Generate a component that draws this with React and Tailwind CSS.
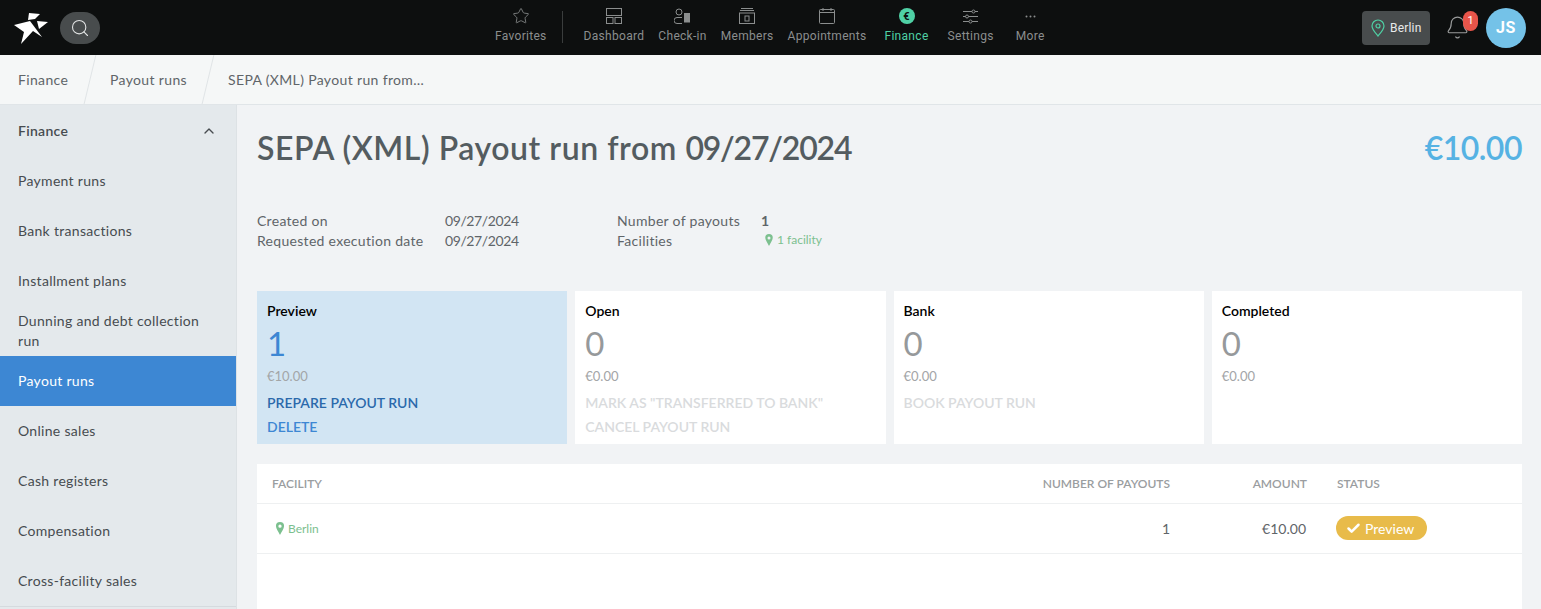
import { ChevronUp, Search, Star, Check, Bell } from "lucide-react";

const Pin = ({ className }) => (
	<svg viewBox="0 0 12 16" className={className} fill="currentColor">
		<path fillRule="evenodd" d="M6 0a5 5 0 0 1 5 5c0 3-3 7-5 11C4 12 1 8 1 5a5 5 0 0 1 5-5Zm0 3.2a2 2 0 1 0 0 4 2 2 0 0 0 0-4Z" />
	</svg>
);

const OutlinePin = () => (
	<svg viewBox="0 0 14 18" className="w-[14px] h-[18px] text-[#4fd1a5]" fill="none" stroke="currentColor" strokeWidth="1.2">
		<path d="M7 1a6 6 0 0 1 6 6c0 3.5-3.5 7-6 10C4.500 14 1 10.500 1 7a6 6 0 0 1 6-6Z" />
		<circle cx="7" cy="7" r="2" />
	</svg>
);

const Logo = () => (
	<svg viewBox="0 0 35 32" className="w-[35px] h-[32px]" fill="#fff">
		<path d="M15 1 L26 2 L21 7 L14 8 Z" />
		<path d="M0 13 L16 9 L28 25 L19 19 L7 32 L10 20 Z" />
		<path d="M23 9 L34 10 L25 17 Z" />
	</svg>
);

const DashboardIcon = () => (
	<svg viewBox="0 0 16 16" className="w-[16px] h-[16px]" fill="none" stroke="currentColor">
		<rect x="0.5" y="0.5" width="15" height="7" />
		<rect x="0.5" y="9.500" width="6.500" height="6" />
		<rect x="9" y="9.500" width="6.500" height="6" />
	</svg>
);

const CheckInIcon = () => (
	<svg viewBox="0 0 17 16" className="w-[17px] h-[16px]" fill="none" stroke="currentColor">
		<circle cx="5" cy="4" r="3" />
		<path d="M8 15.500H3a2.500 2.500 0 0 1 0-6h5" />
		<rect x="10" y="5" width="6" height="9.500" fill="currentColor" stroke="none" />
	</svg>
);

const MembersIcon = () => (
	<svg viewBox="0 0 16 16" className="w-[16px] h-[16px]" fill="none" stroke="currentColor">
		<path d="M2 .5h12M1 2.500h14" />
		<rect x="0.5" y="5" width="15" height="10.500" />
		<rect x="6" y="8" width="4" height="5" />
	</svg>
);

const CalendarIcon = () => (
	<svg viewBox="0 0 16 16" className="w-[16px] h-[16px]" fill="none" stroke="currentColor">
		<rect x="0.5" y="1.500" width="15" height="14" rx="1" />
		<path d="M0.500 4.500h15M4 0v3M12 0v3" />
	</svg>
);

const SettingsIcon = () => (
	<svg viewBox="0 0 15 15" className="w-[15px] h-[15px]" fill="none" stroke="currentColor">
		<path d="M0 2.500h9M12 2.500h3M0 7.500h2.500M5.500 7.500h9.500M0 12.500h6M9 12.500h6" />
		<circle cx="10.500" cy="2.500" r="1.500" />
		<circle cx="4" cy="7.500" r="1.500" />
		<circle cx="7.500" cy="12.500" r="1.500" />
	</svg>
);

const MoreIcon = () => (
	<svg viewBox="0 0 11 3" className="w-[11px] h-[3px]" fill="currentColor">
		<circle cx="1.500" cy="1.500" r="1" />
		<circle cx="5.500" cy="1.500" r="1" />
		<circle cx="9.500" cy="1.500" r="1" />
	</svg>
);

const EuroIcon = () => (
	<div className="w-[16px] h-[16px] rounded-full bg-[#4fd1a5] flex items-center justify-center text-[#0d0f0f] text-[11px] font-bold font-['Roboto',sans-serif] leading-none">
		€
	</div>
);

const NavItem = ({ icon, label, active }) => (
	<div className={`flex flex-col items-center ${active ? "text-[#4fd1a5]" : "text-[#8b8e8e]"}`}>
		<div className="h-[16px] flex items-center justify-center">{icon}</div>
		<span className="text-[12px] leading-[14px] mt-[5px] tracking-[0.3px]">{label}</span>
	</div>
);

const Header = () => (
	<header className="h-[55px] bg-[#0d0f0f] flex items-center relative font-['Roboto',sans-serif] shrink-0">
		<div className="flex items-center pl-[14px] w-[486px]">
			<Logo />
			<div className="ml-[11px] w-[40px] h-[32px] rounded-full bg-[#484c4d] flex items-center justify-center text-[#e2e4e4]">
				<Search size={20} strokeWidth={1.3} />
			</div>
		</div>
		<div className="flex items-start self-start pt-[8px]">
			<div className="pl-[9px] pr-[15px] border-r border-[#3a3d3d] h-[32px] mt-[3px]">
				<div className="-mt-[3px]">
					<NavItem icon={<Star size={18} strokeWidth={1.1} />} label="Favorites" />
				</div>
			</div>
			<div className="flex gap-[14px] pl-[21px]">
				<NavItem icon={<DashboardIcon />} label="Dashboard" />
				<NavItem icon={<CheckInIcon />} label="Check-in" />
				<NavItem icon={<MembersIcon />} label="Members" />
				<NavItem icon={<CalendarIcon />} label="Appointments" />
				<div className="ml-[4px]">
					<NavItem icon={<EuroIcon />} label="Finance" active />
				</div>
				<div className="ml-[5px]">
					<NavItem icon={<SettingsIcon />} label="Settings" />
				</div>
				<div className="ml-[8px]">
					<NavItem icon={<MoreIcon />} label="More" />
				</div>
			</div>
		</div>
		<div className="ml-auto flex items-center pr-[15px]">
			<div className="w-[68px] h-[34px] rounded-[4px] bg-[#484c4d] flex items-center pl-[9px] gap-[5px] text-[#e8eaea] text-[12px] tracking-[0.2px]">
				<OutlinePin />
				<span>Berlin</span>
			</div>
			<div className="relative ml-[15px] text-[#9a9c9c]">
				<Bell size={25} strokeWidth={1.1} />
				<span className="absolute -top-[4px] left-[18px] w-[15px] h-[20px] rounded-full bg-[#e8554a] text-white text-[11px] flex items-center justify-center">
					1
				</span>
			</div>
			<div className="ml-[16px] w-[40px] h-[40px] rounded-full bg-[#74c2e8] text-white font-bold text-[16px] tracking-[0.5px] flex items-center justify-center">
				JS
			</div>
		</div>
	</header>
);

const Breadcrumbs = () => (
	<nav className="h-[50px] bg-[#f5f7f7] border-b border-[#e0e5e8] flex items-center text-[14px] text-[#5f6569] tracking-[0.35px] shrink-0">
		<span className="pl-[18px] w-[92px]">Finance</span>
		<svg viewBox="0 0 14 50" className="w-[14px] h-[49px] -ml-[9px] shrink-0" stroke="#dfe3e5" fill="none">
			<path d="M13 0 L1 50" />
		</svg>
		<span className="pl-[13px] w-[104px] whitespace-nowrap">Payout runs</span>
		<svg viewBox="0 0 14 50" className="w-[14px] h-[49px] shrink-0" stroke="#dfe3e5" fill="none">
			<path d="M13 0 L1 50" />
		</svg>
		<span className="pl-[13px]">SEPA (XML) Payout run from…</span>
	</nav>
);

const sideItems = ["Payment runs", "Bank transactions", "Installment plans", "Dunning and debt collection run", "Payout runs", "Online sales", "Cash registers", "Compensation", "Cross-facility sales"];

const Sidebar = () => (
	<aside className="w-[237px] shrink-0 bg-[#e4e9ec] border-r border-[#dde2e5] text-[14px] text-[#474c50] tracking-[0.3px]">
		<div className="h-[51px] flex items-center justify-between pl-[18px] pr-[19px] font-semibold">
			<span>Finance</span>
			<ChevronUp size={16} strokeWidth={2} />
		</div>
		{sideItems.map((item) => (
			<div
				key={item}
				className={`h-[50px] flex items-center pl-[18px] leading-[20px] ${item === "Payout runs" ? "bg-[#3d87d3] text-white" : ""}`}
			>
				<span className="w-[195px]">{item}</span>
			</div>
		))}
		<div className="border-t border-[#d5dade]" />
	</aside>
);

const InfoRow = ({ children }) => <div className="flex h-[20px] items-center">{children}</div>;

const Card = ({ title, count, amount, actions, active }) => (
	<div className={`h-[153px] px-[10px] pt-[10px] ${active ? "bg-[#d2e5f3]" : "bg-white"}`}>
		<div className="text-[14px] leading-[20px] font-semibold text-black">{title}</div>
		<div className={`text-[33px] leading-[38px] mt-[3px] ${active ? "text-[#3d87d3]" : "text-[#96999b]"}`}>{count}</div>
		<div className="text-[13px] leading-[20px] mt-[4px] text-[#a3a5a7]">{amount}</div>
		<div className="mt-[5px] text-[14px] leading-[24px] font-semibold whitespace-nowrap">
			{actions.map((a) => (
				<div key={a.label} className={a.color}>
					{a.label}
				</div>
			))}
		</div>
	</div>
);

const Main = () => (
	<main className="flex-1 bg-[#f1f3f5] pl-[20px] pr-[19px] overflow-hidden text-[#5f6569]">
		<div className="flex justify-between items-center pt-[24px] h-[62px]">
			<h1 className="text-[32px] leading-[38px] font-semibold text-[#545c60] tracking-[0.55px]">
				SEPA (XML) Payout run from <span className="tracking-[-1.2px]">09/27/2024</span>
			</h1>
			<div className="text-[32px] leading-[38px] font-semibold text-[#56b2e3] tracking-[-0.5px]">€10.00</div>
		</div>
		<div className="flex mt-[43px] text-[14px] tracking-[0.3px]">
			<div className="w-[360px]">
				<InfoRow>
					<span className="w-[188px]">Created on</span>
					<span className="tracking-[-0.4px]">09/27/2024</span>
				</InfoRow>
				<InfoRow>
					<span className="w-[188px]">Requested execution date</span>
					<span className="tracking-[-0.4px]">09/27/2024</span>
				</InfoRow>
			</div>
			<div>
				<InfoRow>
					<span className="w-[144px]">Number of payouts</span>
					<span className="font-bold">1</span>
				</InfoRow>
				<InfoRow>
					<span className="w-[147px]">Facilities</span>
					<span className="flex items-center gap-[3px] text-[12px] tracking-normal text-[#7cc08f]">
						<Pin className="w-[10px] h-[12px]" />1 facility
					</span>
				</InfoRow>
			</div>
		</div>
		<div className="grid grid-cols-4 gap-[8px] mt-[41px]">
			<Card
				active
				title="Preview"
				count="1"
				amount="€10.00"
				actions={[
					{ label: "PREPARE PAYOUT RUN", color: "text-[#2b69ab]" },
					{ label: "DELETE", color: "text-[#3d87d3]" },
				]}
			/>
			<Card
				title="Open"
				count="0"
				amount="€0.00"
				actions={[
					{ label: 'MARK AS "TRANSFERRED TO BANK"', color: "text-[#d9dbdd]" },
					{ label: "CANCEL PAYOUT RUN", color: "text-[#d9dbdd]" },
				]}
			/>
			<Card title="Bank" count="0" amount="€0.00" actions={[{ label: "BOOK PAYOUT RUN", color: "text-[#d9dbdd]" }]} />
			<Card title="Completed" count="0" amount="€0.00" actions={[]} />
		</div>
		<div className="bg-white mt-[20px] h-[200px]">
			<div className="flex items-center h-[40px] border-b border-[#eef0f1] text-[12px] font-semibold text-[#9a9da0]">
				<span className="pl-[15px] flex-1">FACILITY</span>
				<span className="w-[140px] text-right whitespace-nowrap">NUMBER OF PAYOUTS</span>
				<span className="w-[137px] text-right">AMOUNT</span>
				<span className="w-[215px] pl-[30px]">STATUS</span>
			</div>
			<div className="flex items-center h-[50px] border-b border-[#eef0f1] text-[14px]">
				<span className="pl-[18px] flex-1 flex items-center gap-[3px] text-[12px] text-[#7cc08f]">
					<Pin className="w-[10px] h-[13px]" />
					Berlin
				</span>
				<span className="w-[140px] text-right">1</span>
				<span className="w-[136px] text-right">€10.00</span>
				<span className="w-[216px] pl-[30px]">
					<span className="inline-flex items-center gap-[4px] h-[24px] w-[91px] pl-[10px] rounded-full bg-[#e8bb4a] text-white text-[14px]">
						<Check size={15} strokeWidth={4} />
						Preview
					</span>
				</span>
			</div>
		</div>
	</main>
);

export default function App() {
	return (
		<div className="h-screen overflow-hidden flex flex-col font-['Lato',sans-serif]">
			<Header />
			<Breadcrumbs />
			<div className="flex flex-1 overflow-hidden">
				<Sidebar />
				<Main />
			</div>
		</div>
	);
}
